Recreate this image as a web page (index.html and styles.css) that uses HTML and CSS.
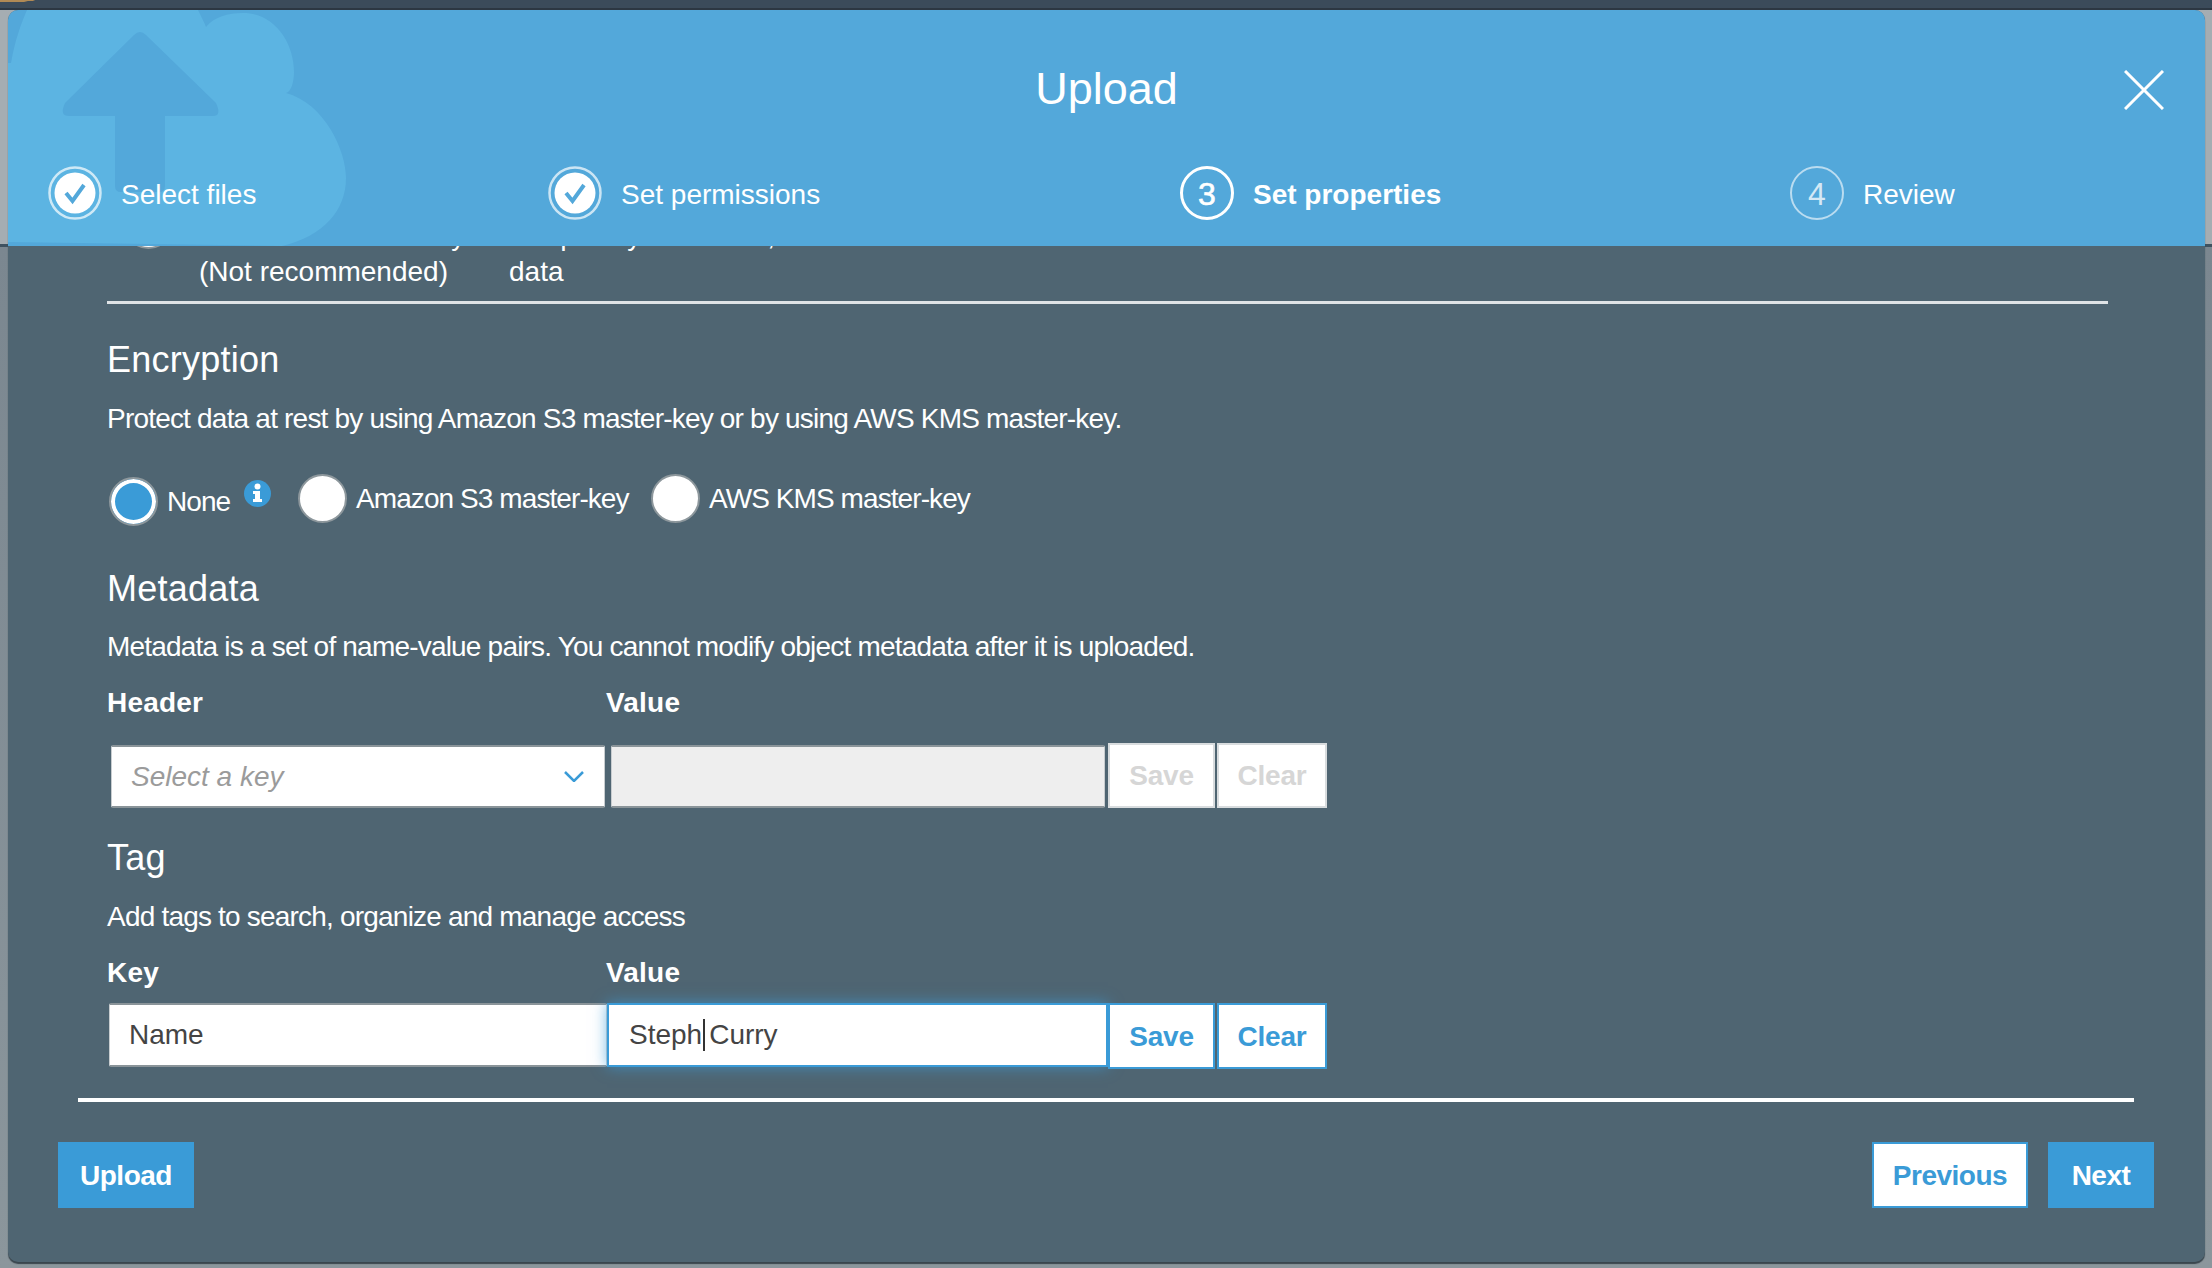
FILE: index.html
```html
<!DOCTYPE html>
<html lang="en">
<head>
  <meta charset="UTF-8" />
  <title>Upload</title>
  <link rel="stylesheet" href="styles.css">
</head>
<body>
  <div class="top-bar"></div>
  <div class="modal">
    <header class="modal-head">
      <svg class="cloud" width="346" height="236" viewBox="0 0 346 236">
        <path fill="#5cb4e2" d="M5 53 C9 30 15 14 21 0 L192 0 C195 6 198 12 200 17 C208 7 222 3 237 3 C268 3 288 32 288 62 C288 72 285 82 280 83 C318 93 340 140 340 168 C340 200 318 226 276 236 L2 232 L0 232 L0 53 Z"/>
        <path fill="#53a8da" d="M128 25 Q134 19 140 25 L210 93 Q216 106 207 106 L159 106 L159 176 Q159 182 153 182 L115 182 Q109 182 109 176 L109 106 L63 106 Q53 106 59 93 Z"/>
      </svg>
      <h1 class="modal-title">Upload</h1>
      <button class="close-btn" aria-label="Close">
        <svg width="40" height="40" viewBox="0 0 40 40"><path d="M1 1 L39 39 M39 1 L1 39" stroke="#fff" stroke-width="3" fill="none"/></svg>
      </button>
      <ol class="steps">
        <li class="step">
          <svg class="step-check" width="54" height="54" viewBox="0 0 54 54">
            <circle cx="27" cy="27" r="25.5" fill="none" stroke="#fff" stroke-opacity="0.7" stroke-width="2.5"/>
            <circle cx="27" cy="27" r="20.5" fill="#fff"/>
            <path d="M18 27 L24.5 35 L36 19" fill="none" stroke="#53a8da" stroke-width="4"/>
          </svg>
          <span>Select files</span>
        </li>
        <li class="step">
          <svg class="step-check" width="54" height="54" viewBox="0 0 54 54">
            <circle cx="27" cy="27" r="25.5" fill="none" stroke="#fff" stroke-opacity="0.7" stroke-width="2.5"/>
            <circle cx="27" cy="27" r="20.5" fill="#fff"/>
            <path d="M18 27 L24.5 35 L36 19" fill="none" stroke="#53a8da" stroke-width="4"/>
          </svg>
          <span>Set permissions</span>
        </li>
        <li class="step step-current">
          <span class="step-num">3</span>
          <span>Set properties</span>
        </li>
        <li class="step step-todo">
          <span class="step-num">4</span>
          <span>Review</span>
        </li>
      </ol>
    </header>

    <div class="modal-body">
      <div class="storage-row">
        <span class="radio"></span>
        <div class="storage-name">Reduced redundancy<br>(Not recommended)</div>
        <div class="storage-use">Frequently accessed, non-critical<br>data</div>
        <div class="storage-zones">≥ 3</div>
      </div>

      <section class="encryption">
        <h2>Encryption</h2>
        <p>Protect data at rest by using Amazon S3 master-key or by using AWS KMS master-key.</p>
        <div class="radio-row">
          <label class="radio-item">
            <span class="radio radio-on"></span>
            <span>None</span>
            <svg class="info" width="27" height="27" viewBox="0 0 27 27">
              <circle cx="13.5" cy="13.5" r="13.5" fill="#3a9bd7"/>
              <circle cx="13.5" cy="6.5" r="3" fill="#fff"/>
              <path d="M9 11 H16 V19 H18 V22 H9 V19 H11 V14 H9 Z" fill="#fff"/>
            </svg>
          </label>
          <label class="radio-item">
            <span class="radio"></span>
            <span>Amazon S3 master-key</span>
          </label>
          <label class="radio-item">
            <span class="radio"></span>
            <span>AWS KMS master-key</span>
          </label>
        </div>
      </section>

      <section class="metadata">
        <h2>Metadata</h2>
        <p>Metadata is a set of name-value pairs. You cannot modify object metadata after it is uploaded.</p>
        <div class="col-labels"><b>Header</b><b>Value</b></div>
        <div class="field-row">
          <div class="field select-field">
            <span>Select a key</span>
            <svg width="20" height="11" viewBox="0 0 20 11"><path d="M1 1 L10 10 L19 1" fill="none" stroke="#3a9bd7" stroke-width="2.5"/></svg>
          </div>
          <div class="field field-disabled"></div>
          <button class="mini-btn" disabled>Save</button>
          <button class="mini-btn" disabled>Clear</button>
        </div>
      </section>

      <section class="tag">
        <h2>Tag</h2>
        <p>Add tags to search, organize and manage access</p>
        <div class="col-labels"><b>Key</b><b>Value</b></div>
        <div class="field-row field-row-tag">
          <div class="field">Name</div>
          <div class="field field-focus">Steph<i class="caret"></i>Curry</div>
          <button class="mini-btn mini-btn-on">Save</button>
          <button class="mini-btn mini-btn-on">Clear</button>
        </div>
      </section>
    </div>

    <footer class="modal-foot">
      <button class="btn btn-primary btn-upload">Upload</button>
      <div class="foot-right">
        <button class="btn btn-outline">Previous</button>
        <button class="btn btn-primary btn-next">Next</button>
      </div>
    </footer>
  </div>
</body>
</html>
```

FILE: styles.css
```css
* { box-sizing: border-box; }
html, body { margin: 0; height: 100%; }
body {
  font-family: "Liberation Sans", Arial, sans-serif;
  font-size: 28px;
  color: #fff;
  overflow: hidden;
  background: linear-gradient(#a5adb2 0, #a5adb2 244px, #3f5260 244px, #3f5260 247px, #7b8790 247px, #8b969c 100%);
}
.top-bar {
  height: 10px;
  background: radial-gradient(ellipse 24px 2px at 12px 0, #b08a55 90%, transparent 100%), #3b4b5a;
  border-bottom: 2px solid #2c3742;
}
.modal {
  width: 2197px;
  height: 1252px;
  margin-left: 8px;
  border-radius: 10px;
  background: #4f6572;
  box-shadow: 0 2px 1px #3a464e;
  display: flex;
  flex-direction: column;
  overflow: hidden;
}

/* header */
.modal-head {
  position: relative;
  flex: none;
  height: 236px;
  background: #53a8da;
  overflow: hidden;
}
.cloud { position: absolute; left: -2px; top: 0; }
.modal-title {
  position: relative;
  margin: 0;
  padding-top: 54px;
  height: 119px;
  font-size: 45px;
  line-height: 50px;
  font-weight: 400;
  text-align: center;
}
.close-btn {
  position: absolute;
  right: 41px;
  top: 60px;
  padding: 0;
  border: 0;
  background: none;
  line-height: 0;
}
.steps {
  position: relative;
  list-style: none;
  margin: 37px 0 0;
  padding: 0 0 0 40px;
  display: grid;
  grid-template-columns: 500px 632px 610px auto;
}
.step {
  display: flex;
  align-items: center;
  height: 54px;
  gap: 19px;
}
.step > span:last-child { position: relative; top: 2px; }
.step-num {
  width: 54px;
  height: 54px;
  padding-top: 2px;
  border: 3px solid #fff;
  border-radius: 50%;
  display: flex;
  align-items: center;
  justify-content: center;
  font-size: 32px;
}
.step-current { font-weight: 700; }
.step-current .step-num { font-weight: 400; -webkit-text-stroke: 0.6px #fff; }
.step-todo .step-num { border-width: 2px; border-color: rgba(255,255,255,0.6); color: rgba(255,255,255,0.75); }

/* body */
.modal-body {
  flex: 1;
  padding-left: 99px;
  padding-right: 97px;
  overflow: hidden;
}
h2 {
  margin: 0;
  font-size: 36px;
  line-height: 40px;
  font-weight: 400;
  letter-spacing: 0.25px;
}
p {
  margin: 0;
  line-height: 34px;
  letter-spacing: -0.8px;
}
.storage-row {
  margin-top: -28px;
  height: 86px;
  border-bottom: 3px solid #dfe3e6;
  display: grid;
  grid-template-columns: 92px 310px 485px auto;
  line-height: 36px;
}
.storage-row .radio { margin-top: -18px; margin-left: 17px; }

.encryption { padding-top: 36px; }
.encryption p { margin-top: 22px; }
.radio-row {
  display: flex;
  align-items: flex-start;
  margin-top: 38px;
  margin-left: 2px;
}
.radio-item { display: flex; align-items: center; gap: 9px; letter-spacing: -0.92px; }
.radio-item:nth-child(1) { margin-top: 3px; width: 189px; }
.radio-item:nth-child(2) { width: 353px; }
.radio {
  flex: none;
  width: 49px;
  height: 49px;
  border-radius: 50%;
  background: #fff;
  border: 2px solid #8d979c;
  display: block;
}
.radio-on { background: #3a9bd7; box-shadow: inset 0 0 0 4px #fff; }
.info { align-self: flex-start; margin-left: 5px; margin-top: 3px; }

.metadata { padding-top: 43px; }
.metadata p { margin-top: 21px; }
.col-labels {
  display: grid;
  grid-template-columns: 499px auto;
  margin-top: 22px;
  line-height: 34px;
}
.col-labels b { font-weight: 700; letter-spacing: 0.2px; }
.field-row {
  display: flex;
  margin-top: 23px;
  height: 65px;
  padding-left: 4px;
  align-items: flex-end;
}
.field {
  width: 494px;
  height: 63px;
  margin-right: 6px;
  padding: 0 19px;
  background: #fff;
  border: 1px solid #c8cdd0;
  border-top: 2px solid #8a9499;
  border-bottom: 2px solid #8a9499;
  border-radius: 2px;
  color: #444;
  display: flex;
  align-items: center;
}
.select-field {
  justify-content: space-between;
  color: #9b9b9b;
  font-style: italic;
  padding: 0 20px 0 19px;
}
.field-disabled { background: #eee; margin-right: 3px; }
.mini-btn {
  height: 65px;
  margin-right: 2px;
  padding: 0;
  border: 2px solid #d8dcde;
  background: #fff;
  color: #d6d6d6;
  font: 700 28px "Liberation Sans", Arial, sans-serif;
  letter-spacing: -0.2px;
  width: 107px;
}
.mini-btn + .mini-btn { width: 110px; }

.tag { padding-top: 30px; }
.tag p { margin-top: 22px; }
.field-row-tag { margin-top: 13px; height: 66px; padding-left: 2px; align-items: flex-start; }
.field-row-tag .field { width: 498px; height: 64px; margin-right: 0; }
.field-row-tag .field-focus {
  width: 501px;
  padding-left: 20px;
  border: 2px solid #3a9bd7;
  box-shadow: 0 0 14px rgba(58,155,215,0.7);
  border-radius: 0;
}
.caret { display: inline-block; width: 2px; height: 32px; margin: 0 4px 0 1px; background: #333; }
.mini-btn-on { height: 66px; padding-top: 2px; border-color: #3a9bd7; color: #3a9bd7; }

/* footer */
.modal-foot {
  flex: none;
  height: 164px;
  padding: 44px 51px 0 50px;
  display: flex;
  justify-content: space-between;
  align-items: flex-start;
  position: relative;
}
.modal-foot::before {
  content: "";
  position: absolute;
  left: 70px;
  right: 71px;
  top: 0;
  height: 4px;
  background: #fff;
}
.foot-right { display: flex; gap: 20px; }
.btn {
  height: 66px;
  width: 156px;
  padding: 2px 0 0;
  border: 2px solid #3a9bd7;
  font: 700 28px "Liberation Sans", Arial, sans-serif;
  letter-spacing: -0.5px;
}
.btn-upload { width: 136px; }
.btn-next { width: 106px; }
.btn-primary { background: #3a9bd7; color: #fff; }
.btn-outline { background: #fff; color: #3a9bd7; }
```
